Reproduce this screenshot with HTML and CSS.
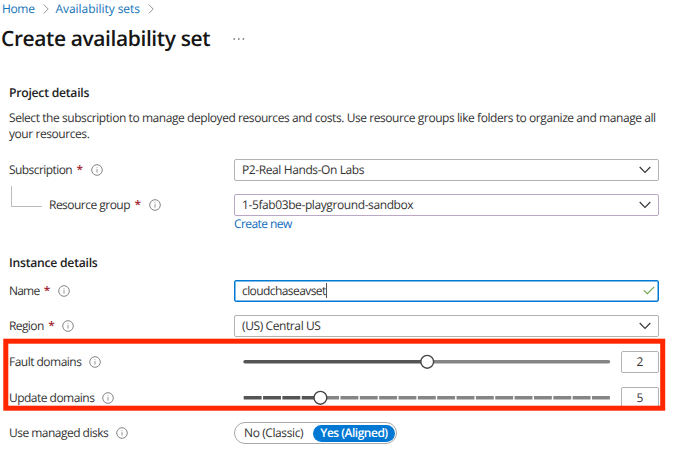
FILE: index.html
```html
<!DOCTYPE html>
<html lang="en">
<head>
<meta charset="utf-8">
<title>Create availability set</title>
<link rel="stylesheet" href="styles.css">
</head>
<body>
<svg class="defs" width="0" height="0" aria-hidden="true">
  <symbol id="info" viewBox="0 0 12 12"><circle cx="6" cy="6" r="5.3" fill="none" stroke="#777" stroke-width=".9"/><path d="M6 5.1V8.6M6 3.3V4.2" stroke="#888" stroke-width=".9"/></symbol>
  <symbol id="down" viewBox="0 0 12 8"><path d="M.7 1L6 6.4 11.3 1" fill="none" stroke="#333" stroke-width="1.1"/></symbol>
  <symbol id="next" viewBox="0 0 6 10"><path d="M.8.6L5.2 5 .8 9.4" fill="none" stroke="#888" stroke-width=".9"/></symbol>
  <symbol id="check" viewBox="0 0 12 9"><path d="M.8 4.4L4.3 7.7 11.2.8" fill="none" stroke="#6da548" stroke-width="1.1"/></symbol>
</svg>
<nav class="crumbs">
  <a class="home">Home</a><svg class="next"><use href="#next"/></svg><a class="sets">Availability sets</a><svg class="next"><use href="#next"/></svg>
</nav>
<header class="title"><h1>Create availability set</h1><svg class="more" viewBox="0 0 12 2"><path d="M.5 1h1.4M5.1 1h1.4M9.7 1h1.4" stroke="#666" stroke-width="1.3"/></svg></header>
<main>
  <section class="project">
    <h2 class="h-project">Project details</h2>
    <p>Select the subscription to manage deployed resources and costs. Use resource groups like folders to organize and manage all<br><span class="line2">your resources.</span></p>
    <div class="row"><div class="label"><span class="t-sub">Subscription</span><b>*</b><svg class="info"><use href="#info"/></svg></div>
      <div class="field"><span class="v-sub">P2-Real Hands-On Labs</span><svg class="down"><use href="#down"/></svg></div></div>
    <div class="row"><div class="label child"><i class="elbow"></i><span class="t-group">Resource group</span><b>*</b><svg class="info"><use href="#info"/></svg></div>
      <div class="field visited"><span class="v-group">1-5fab03be-playground-sandbox</span><svg class="down"><use href="#down"/></svg></div></div>
    <a class="create">Create new</a>
  </section>
  <section class="instance">
    <h2 class="h-instance">Instance details</h2>
    <div class="row"><div class="label"><span class="t-name">Name</span><b>*</b><svg class="info"><use href="#info"/></svg></div>
      <div class="field focus"><span class="v-name">cloudchaseavset</span><i class="caret"></i><svg class="check"><use href="#check"/></svg></div></div>
    <div class="row"><div class="label"><span class="t-region">Region</span><b>*</b><svg class="info"><use href="#info"/></svg></div>
      <div class="field"><span class="v-region">(US) Central US</span><svg class="down"><use href="#down"/></svg></div></div>
    <div class="row"><div class="label"><span class="t-fault">Fault domains</span><svg class="info wide"><use href="#info"/></svg></div>
      <div class="range"><svg class="slider" viewBox="0 0 368 16"><path d="M2 7.8H184" stroke="#555" stroke-width="3.4" stroke-linecap="round"/><path d="M184 7.8H365.5" stroke="#858585" stroke-width="3.4" stroke-linecap="round"/><circle cx="184.2" cy="7.8" r="6.4" fill="#fff" stroke="#444" stroke-width="1.4"/></svg><div class="number">2</div></div></div>
    <div class="row"><div class="label"><span class="t-update">Update domains</span><svg class="info wide"><use href="#info"/></svg></div>
      <div class="range"><svg class="slider" viewBox="0 0 368 16"><path d="M.7 7.8H77" stroke="#555" stroke-width="3.4" stroke-dasharray="17.9 1.45"/><path d="M78.1 7.8H367.3" stroke="#858585" stroke-width="3.4" stroke-dasharray="17.9 1.45"/><circle cx="77.4" cy="7.8" r="6.4" fill="#fff" stroke="#444" stroke-width="1.4"/></svg><div class="number">5</div></div></div>
    <div class="row"><div class="label"><span class="t-disks">Use managed disks</span><svg class="info wide"><use href="#info"/></svg></div>
      <div class="toggle"><span class="no">No (Classic)</span><span class="yes"><span class="t-yes">Yes (Aligned)</span></span></div></div>
  </section>
</main>
<svg class="highlight" viewBox="0 0 664 74"><rect x="2.8" y="3.2" width="656.9" height="67" fill="none" stroke="#ff2600" stroke-width="5"/></svg>
</body>
</html>
```
FILE: styles.css
```css
* { box-sizing: border-box; }
body { margin: 0; width: 680px; height: 458px; overflow: hidden; background: #fff; color: #333; font: 12px/16px "Open Sans", "Noto Sans", sans-serif; position: relative; text-rendering: geometricPrecision; }
svg { display: block; flex: none; }
.defs { position: absolute; }
span, a, h1, h2 { white-space: nowrap; }
.crumbs { display: flex; align-items: center; height: 18px; padding-left: 2px; color: #1272b6; }
.home { letter-spacing: -.35px; }
.sets { letter-spacing: -.05px; }
.next { width: 6px; height: 10px; margin: 0 7px 0 8px; }
.title { display: flex; align-items: center; height: 42px; padding-left: 1px; }
h1 { margin: 0; font-size: 21px; line-height: 28px; font-weight: 600; letter-spacing: -.4px; color: #161616; }
.more { width: 12px; height: 2px; margin-left: 23px; }
main { padding: 25px 0 0 9px; }
h2 { margin: 0; font-size: 12.2px; line-height: 16px; font-weight: 600; letter-spacing: -.25px; color: #222; }
p { margin: 9px 0 10.7px; line-height: 15.5px; white-space: nowrap; letter-spacing: -.43px; }
.row { display: flex; align-items: center; height: 35.7px; }
.label { width: 225px; display: flex; align-items: center; flex: none; letter-spacing: -.5px; }
.label b { margin-left: 4.5px; color: #a4262c; font-weight: 600; }
.t-sub { letter-spacing: -.57px; }
.t-name { letter-spacing: -.8px; }
.t-region { letter-spacing: -.6px; }
.t-group, .t-fault, .t-update, .t-disks { letter-spacing: -.52px; }
.info { width: 12px; height: 12px; margin-left: 8px; }
.info.wide { margin-left: 7.8px; }
.elbow { width: 31px; height: 21px; margin: -18px 7px 0 2px; border: solid #bbb; border-width: 0 0 1px 1px; }
.field { width: 425px; height: 22px; display: flex; align-items: center; padding: 0 7px; border: 1px solid #b3b3b3; border-radius: 2px; letter-spacing: -.4px; }
.visited { border-color: #bba8c5; }
.focus { border: 1.5px solid #0078d4; box-shadow: inset 0 0 0 .5px #0078d4; letter-spacing: -.58px; }
.down { width: 12px; height: 8px; margin-left: auto; }
.check { width: 12px; height: 9px; margin-left: auto; margin-right: -4px; }
.caret { width: 1px; height: 15px; background: #555; }
.create { display: block; margin: -7.4px 0 0 225px; height: 16px; color: #0f6cbd; letter-spacing: -.58px; }
.instance { margin-top: 23.5px; }
.h-instance { margin-bottom: 1.5px; }
.range { width: 425px; display: flex; align-items: center; justify-content: space-between; padding-left: 9px; }
.slider { width: 368px; height: 16px; }
.number { width: 38px; height: 22px; border: 1px solid #b3b3b3; border-radius: 2px; text-align: center; line-height: 20px; }
.toggle { width: 163px; height: 22px; display: flex; align-items: center; border: 1px solid #aaa; border-radius: 11px; padding: 0 1px 0 9px; justify-content: space-between; letter-spacing: -.4px; }
.yes { width: 82px; height: 17px; border-radius: 9px; background: #0078d4; color: #fff; font-weight: 600; letter-spacing: -.5px; display: flex; align-items: center; justify-content: center; }
.highlight { position: absolute; left: 3px; top: 338px; width: 664px; height: 74px; }
```
